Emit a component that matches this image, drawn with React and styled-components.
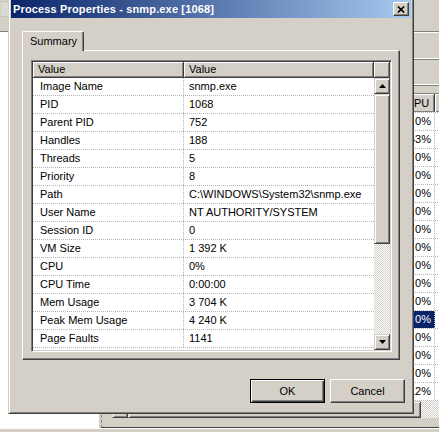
import React from "react";
import styled, { createGlobalStyle } from "styled-components";

const GlobalStyle = createGlobalStyle`
  html, body {
    margin: 0;
    padding: 0;
  }
  body {
    font-family: "Liberation Sans", Arial, sans-serif;
    font-size: 11px;
    color: #000;
  }
`;

const FACE = "#d4d0c8";
const SHADOW = "#808080";
const DARK = "#404040";

const Desktop = styled.div`
  position: relative;
  width: 439px;
  height: 432px;
  overflow: hidden;
  background: ${FACE};
`;

/* ---------- window behind (task manager) ---------- */

const BackWindow = styled.div`
  position: absolute;
  left: 0;
  top: 0;
  width: 480px;
  height: 432px;
  display: grid;
  grid-template-rows: 32px 1fr 4px;
  background: ${FACE};
`;

const BackToolbar = styled.div`
  box-sizing: border-box;
  border-bottom: 1px solid ${SHADOW};
  padding: 1px 0 0 0;
`;

const FadedIcon = styled.div`
  width: 7px;
  height: 14px;
  margin-left: 1px;
  border: 1px solid #c4c0b8;
  border-left: none;
  background: #dcd9d2;
`;

const BackBody = styled.div`
  display: grid;
  grid-template-columns: 100px 1fr;
  border-top: 1px solid #fff;
`;

const TreePane = styled.div`
  background: #fff;
  border-right: 1px solid ${FACE};
`;

const MainPane = styled.div`
  display: flex;
  flex-direction: column;
  border-left: 1px dashed ${SHADOW};
  border-bottom: 1px solid ${DARK};
  margin-left: 1px;
  padding-left: 10px;
`;

const PaneRule = styled.div`
  height: ${(p) => p.$h}px;
  border-bottom: 1px solid #fff;
  box-shadow: 0 1px 0 ${SHADOW};
  margin-left: -11px;
`;

const BackList = styled.div`
  margin-top: 8px;
  border-top: 1px solid ${SHADOW};
  background: #fff;
`;

const BackGrid = styled.div`
  display: grid;
  grid-template-columns: 1fr 35px 45px;
  height: ${(p) => p.$h}px;
  box-sizing: border-box;
  border-bottom: 1px dotted #b4b4b4;
`;

const BackHeadCell = styled.div`
  background: ${FACE};
  box-shadow: inset 1px 1px #fff, inset -1px -1px ${SHADOW};
  border-right: 1px solid ${DARK};
  padding-left: 6px;
  line-height: 18px;
  white-space: nowrap;
  overflow: hidden;
`;

const CpuCell = styled.div`
  text-align: right;
  padding-right: 3px;
  line-height: 17px;
  border-right: 1px dotted #b4b4b4;
  background: ${(p) => (p.$selected ? "#0a246a" : "transparent")};
  color: ${(p) => (p.$selected ? "#fff" : "#000")};
`;

const HScroll = styled.div`
  display: flex;
  height: 17px;
  background-image: repeating-conic-gradient(#fff 0 25%, ${FACE} 0 50%);
  background-size: 2px 2px;
`;

const ScrollPart = styled.div`
  box-sizing: border-box;
  width: ${(p) => (p.$w ? `${p.$w}px` : "auto")};
  height: ${(p) => (p.$h ? `${p.$h}px` : "auto")};
  flex: none;
  background: ${FACE};
  border: 1px solid;
  border-color: ${FACE} ${DARK} ${DARK} ${FACE};
  box-shadow: inset 1px 1px #fff, inset -1px -1px ${SHADOW};
  display: flex;
  align-items: center;
  justify-content: center;
`;

const BottomStrip = styled.div`
  border-top: 1px solid #fff;
  background: ${FACE};
`;

/* ---------- properties dialog ---------- */

const Dialog = styled.div`
  position: absolute;
  left: 8px;
  top: -3px;
  width: 406px;
  height: 417px;
  box-sizing: border-box;
  background: ${FACE};
  border: 1px solid;
  border-color: ${FACE} ${DARK} ${DARK} ${FACE};
  box-shadow: inset 1px 1px #fff, inset -1px -1px ${SHADOW};
  padding: 2px;
  display: flex;
  flex-direction: column;
`;

const TitleBar = styled.div`
  height: 18px;
  flex: none;
  display: flex;
  align-items: center;
  justify-content: space-between;
  padding: 0 2px;
  background: linear-gradient(to right, #0a246a, #a6caf0);
`;

const TitleText = styled.span`
  color: #fff;
  font-weight: bold;
  font-size: 11px;
  letter-spacing: 0.15px;
  white-space: nowrap;
`;

const CloseButton = styled.button`
  width: 16px;
  height: 14px;
  padding: 0;
  box-sizing: border-box;
  background: ${FACE};
  border: 1px solid;
  border-color: #fff ${DARK} ${DARK} #fff;
  box-shadow: inset -1px -1px ${SHADOW};
  display: flex;
  align-items: center;
  justify-content: center;
`;

const Client = styled.div`
  flex: 1;
  display: flex;
  flex-direction: column;
  padding: 13px 6px 0 11px;
`;

const TabStrip = styled.div`
  display: flex;
`;

const Tab = styled.div`
  position: relative;
  z-index: 1;
  box-sizing: border-box;
  height: 20px;
  margin-bottom: -1px;
  padding: 0 6px 1px 7px;
  display: flex;
  align-items: center;
  background: ${FACE};
  border-top: 1px solid #fff;
  border-left: 1px solid #fff;
  border-right: 1px solid ${DARK};
  border-top-left-radius: 2px;
  border-top-right-radius: 2px;
  box-shadow: inset -1px 0 ${SHADOW};
`;

const TabPanel = styled.div`
  width: 378px;
  box-sizing: border-box;
  padding: 9px 7px 7px 8px;
  border: 1px solid;
  border-color: #fff ${DARK} ${DARK} #fff;
  box-shadow: inset -1px -1px ${SHADOW};
`;

const ListView = styled.div`
  width: 361px;
  height: 292px;
  box-sizing: border-box;
  background: #fff;
  border: 1px solid;
  border-color: ${SHADOW} #fff #fff ${SHADOW};
  box-shadow: inset 1px 1px ${DARK}, inset -1px -1px ${FACE};
  padding: 1px;
  display: flex;
  flex-direction: column;
`;

const Header = styled.div`
  display: grid;
  grid-template-columns: 151px 190px 16px;
  height: 16px;
  flex: none;
`;

const HeaderCell = styled.div`
  box-sizing: border-box;
  background: ${FACE};
  border-right: 1px solid ${DARK};
  border-bottom: 1px solid ${DARK};
  box-shadow: inset 1px 1px #fff, inset -1px -1px ${SHADOW};
  padding-left: 5px;
  line-height: 15px;
`;

const ListBody = styled.div`
  flex: 1;
  display: flex;
  min-height: 0;
`;

const Rows = styled.div`
  flex: 1;
`;

const Row = styled.div`
  display: grid;
  grid-template-columns: 151px 1fr;
  height: 18px;
  box-sizing: border-box;
  border-bottom: 1px dotted #b4b4b4;
`;

const Cell = styled.div`
  line-height: 17px;
  white-space: nowrap;
  overflow: hidden;
  padding-left: ${(p) => (p.$first ? 7 : 5)}px;
  border-right: ${(p) => (p.$first ? "1px dotted #b4b4b4" : "none")};
`;

const VScroll = styled.div`
  width: 16px;
  display: flex;
  flex-direction: column;
`;

const Track = styled.div`
  flex: 1;
  background-image: repeating-conic-gradient(#fff 0 25%, ${FACE} 0 50%);
  background-size: 2px 2px;
`;

const ButtonRow = styled.div`
  display: flex;
  justify-content: flex-end;
  gap: 5px;
  margin-top: 19px;
`;

const PushButton = styled.button`
  width: 75px;
  height: 24px;
  box-sizing: border-box;
  padding: 0;
  font-family: "Liberation Sans", Arial, sans-serif;
  font-size: 11px;
  color: #000;
  background: ${FACE};
  border: 1px solid;
  border-color: ${(p) => (p.$default ? "#000" : `#fff ${DARK} ${DARK} #fff`)};
  box-shadow: ${(p) =>
    p.$default
      ? `inset 1px 1px #fff, inset -1px -1px ${DARK}, inset -2px -2px ${SHADOW}`
      : `inset -1px -1px ${SHADOW}`};
`;

const Arrow = ({ down }) => (
  <svg width="7" height="4" viewBox="0 0 7 4">
    <path d={down ? "M0 0H7L3.5 4Z" : "M0 4H7L3.5 0Z"} fill="#000" />
  </svg>
);

const LeftArrow = () => (
  <svg width="4" height="7" viewBox="0 0 4 7">
    <path d="M4 0V7L0 3.5Z" fill="#000" />
  </svg>
);

const CloseGlyph = () => (
  <svg width="8" height="7" viewBox="0 0 8 7">
    <path d="M0.8 0.5L7.2 6.5M7.2 0.5L0.8 6.5" stroke="#000" strokeWidth="1.7" />
  </svg>
);

const cpuLoad = [
  "0%", "43%", "0%", "0%", "0%", "0%", "0%", "0%",
  "0%", "0%", "0%", "0%", "0%", "0%", "0%", "12%",
];
const SELECTED = 11;

const properties = [
  ["Image Name", "snmp.exe"],
  ["PID", "1068"],
  ["Parent PID", "752"],
  ["Handles", "188"],
  ["Threads", "5"],
  ["Priority", "8"],
  ["Path", "C:\\WINDOWS\\System32\\snmp.exe"],
  ["User Name", "NT AUTHORITY/SYSTEM"],
  ["Session ID", "0"],
  ["VM Size", "1 392 K"],
  ["CPU", "0%"],
  ["CPU Time", "0:00:00"],
  ["Mem Usage", "3 704 K"],
  ["Peak Mem Usage", "4 240 K"],
  ["Page Faults", "1141"],
];

function TaskManagerBehind() {
  return (
    <BackWindow>
      <BackToolbar>
        <FadedIcon />
      </BackToolbar>
      <BackBody>
        <TreePane />
        <MainPane>
          <PaneRule $h={25} />
          <PaneRule $h={25} />
          <BackList>
            <BackGrid $h={19}>
              <BackHeadCell>Image Name</BackHeadCell>
              <BackHeadCell>CPU</BackHeadCell>
              <BackHeadCell />
            </BackGrid>
            {cpuLoad.map((value, i) => (
              <BackGrid key={i} $h={18}>
                <div />
                <CpuCell $selected={i === SELECTED}>{value}</CpuCell>
                <div />
              </BackGrid>
            ))}
          </BackList>
          <HScroll>
            <ScrollPart $w={16} $h={17}>
              <LeftArrow />
            </ScrollPart>
            <ScrollPart $w={293} $h={17} />
          </HScroll>
        </MainPane>
      </BackBody>
      <BottomStrip />
    </BackWindow>
  );
}

export default function App() {
  return (
    <>
      <GlobalStyle />
      <Desktop>
        <TaskManagerBehind />
        <Dialog>
          <TitleBar>
            <TitleText>Process Properties - snmp.exe [1068]</TitleText>
            <CloseButton aria-label="Close">
              <CloseGlyph />
            </CloseButton>
          </TitleBar>
          <Client>
            <TabStrip>
              <Tab>Summary</Tab>
            </TabStrip>
            <TabPanel>
              <ListView>
                <Header>
                  <HeaderCell>Value</HeaderCell>
                  <HeaderCell>Value</HeaderCell>
                  <HeaderCell />
                </Header>
                <ListBody>
                  <Rows>
                    {properties.map(([name, value]) => (
                      <Row key={name}>
                        <Cell $first>{name}</Cell>
                        <Cell>{value}</Cell>
                      </Row>
                    ))}
                  </Rows>
                  <VScroll>
                    <ScrollPart $h={16}>
                      <Arrow />
                    </ScrollPart>
                    <ScrollPart $h={150} />
                    <Track />
                    <ScrollPart $h={16}>
                      <Arrow down />
                    </ScrollPart>
                  </VScroll>
                </ListBody>
              </ListView>
            </TabPanel>
            <ButtonRow>
              <PushButton $default>OK</PushButton>
              <PushButton>Cancel</PushButton>
            </ButtonRow>
          </Client>
        </Dialog>
      </Desktop>
    </>
  );
}
